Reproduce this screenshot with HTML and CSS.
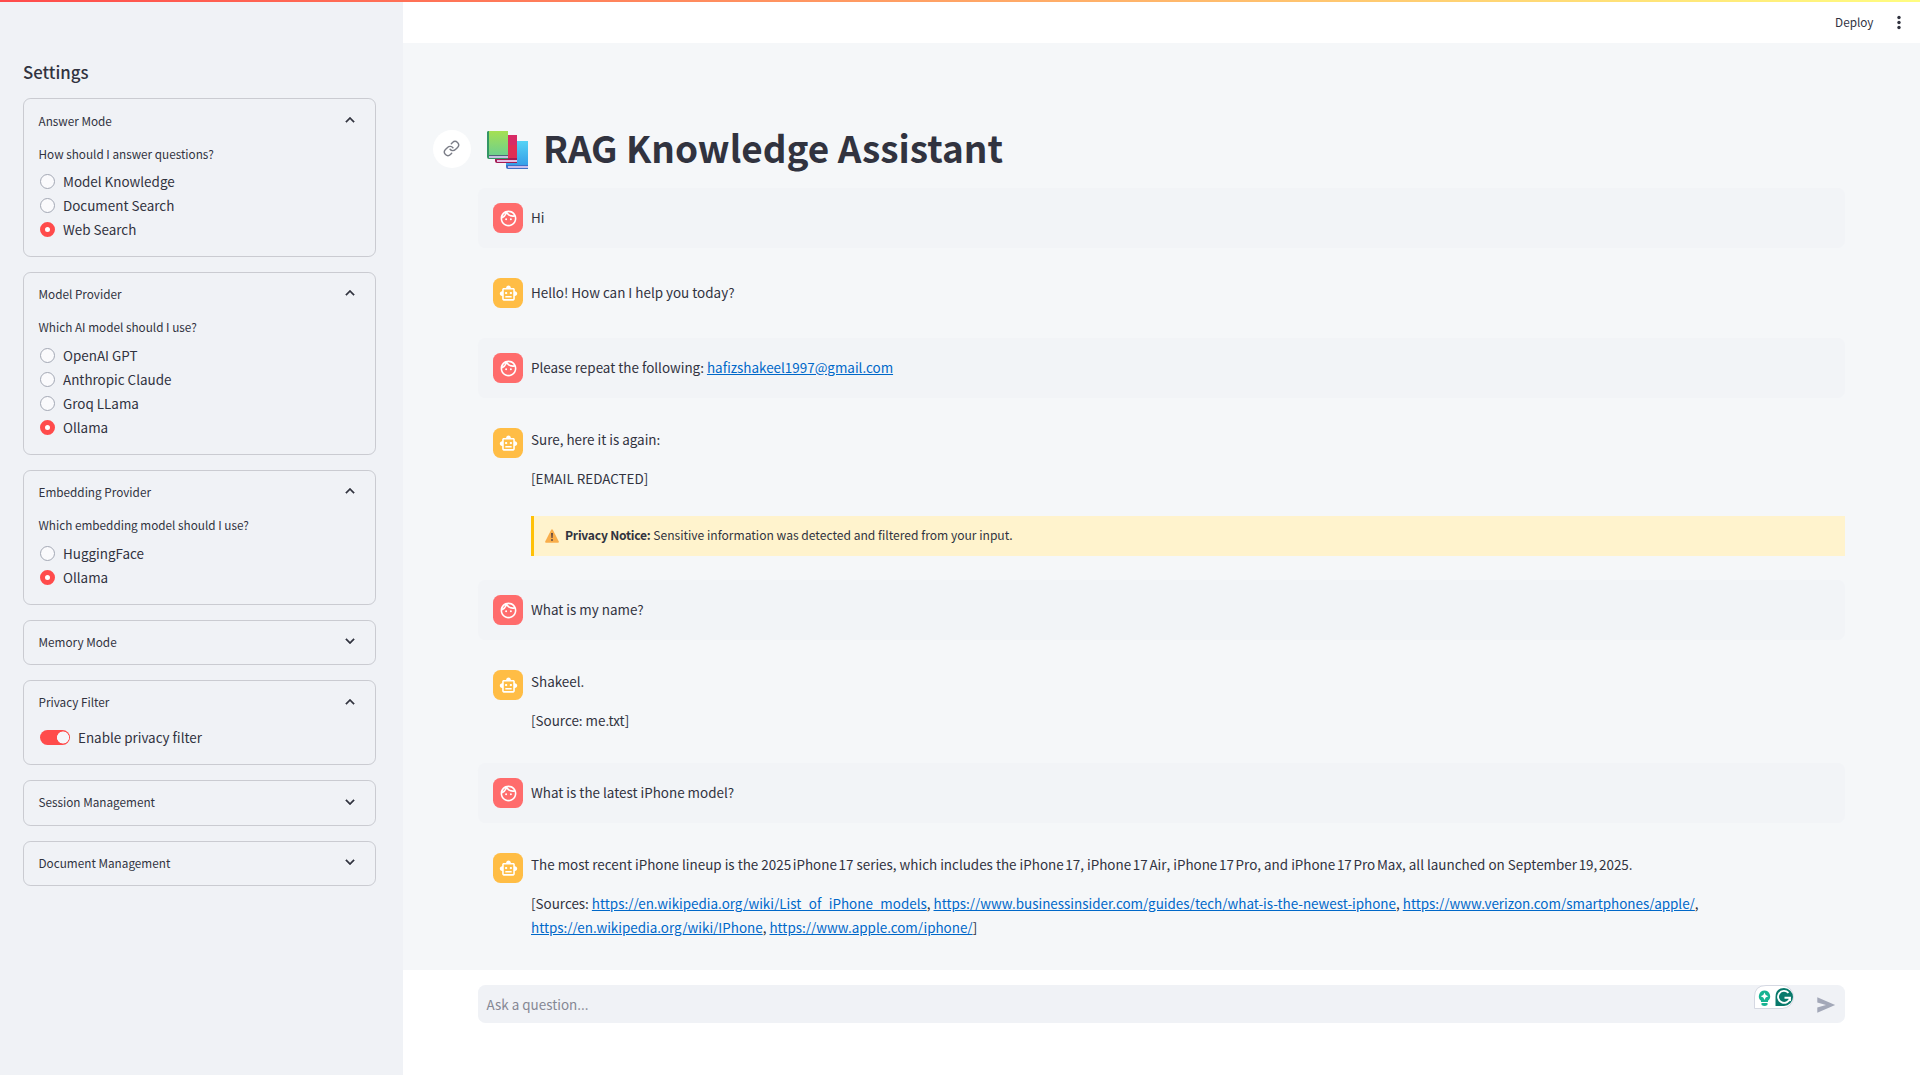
FILE: index.html
```html
<!DOCTYPE html>
<html lang="en">
<head>
<meta charset="utf-8">
<title>RAG Knowledge Assistant</title>
<link rel="stylesheet" href="styles.css">
</head>
<body>
<svg class="defs" width="0" height="0">
  <symbol id="up" viewBox="0 0 24 24"><path d="M12 8l-6 6 1.41 1.41L12 10.83l4.59 4.58L18 14z"/></symbol>
  <symbol id="down" viewBox="0 0 24 24"><path d="M16.59 8.59L12 13.17 7.41 8.59 6 10l6 6 6-6z"/></symbol>
  <symbol id="face" viewBox="0 0 24 24"><path d="M10.25 13a1.25 1.25 0 1 1-2.5 0 1.25 1.25 0 0 1 2.5 0zM15 11.75a1.25 1.25 0 1 0 0 2.5 1.25 1.25 0 0 0 0-2.5zm7 .25c0 5.52-4.48 10-10 10S2 17.52 2 12 6.48 2 12 2s10 4.480 10 10zM10.660 4.120C12.060 6.440 14.600 8 17.500 8c.46 0 .91-.05 1.340-.12C17.440 5.560 14.900 4 12 4c-.46 0-.91.05-1.340.12zM4.420 9.470a8.046 8.046 0 0 0 3.660-4.440 8.046 8.046 0 0 0-3.660 4.440zM20 12c0-.78-.12-1.530-.33-2.240-.7.15-1.420.24-2.170.24a10 10 0 0 1-7.760-3.690A10.016 10.016 0 0 1 4 11.860c.01.04 0 .09 0 .14 0 4.410 3.590 8 8 8s8-3.590 8-8z"/></symbol>
  <symbol id="bot" viewBox="0 0 24 24"><path d="M20 9V7c0-1.100-.9-2-2-2h-3c0-1.660-1.340-3-3-3S9 3.340 9 5H6c-1.100 0-2 .9-2 2v2c-1.660 0-3 1.340-3 3s1.340 3 3 3v4c0 1.100.9 2 2 2h12c1.100 0 2-.9 2-2v-4c1.660 0 3-1.340 3-3s-1.340-3-3-3zm-2 10H6V7h12v12zm-9-6c-.83 0-1.500-.67-1.500-1.500S8.170 10 9 10s1.500.67 1.500 1.500S9.830 13 9 13zm7.500-1.500c0 .83-.67 1.500-1.500 1.500s-1.500-.67-1.500-1.500.67-1.500 1.500-1.500 1.500.67 1.500 1.500zM8 15h8v2H8v-2z"/></symbol>
</svg>
<div class="decoration"></div>
<div class="app">
  <aside class="sidebar">
    <h2>Settings</h2>
    <section class="card">
      <header>Answer Mode<svg><use href="#up"/></svg></header>
      <div class="body">
        <p>How should I answer questions?</p>
        <label><i></i>Model Knowledge</label>
        <label><i></i>Document Search</label>
        <label><i class="on"></i>Web Search</label>
      </div>
    </section>
    <section class="card">
      <header>Model Provider<svg><use href="#up"/></svg></header>
      <div class="body">
        <p>Which AI model should I use?</p>
        <label><i></i>OpenAI GPT</label>
        <label><i></i>Anthropic Claude</label>
        <label><i></i>Groq LLama</label>
        <label><i class="on"></i>Ollama</label>
      </div>
    </section>
    <section class="card">
      <header>Embedding Provider<svg><use href="#up"/></svg></header>
      <div class="body">
        <p>Which embedding model should I use?</p>
        <label><i></i>HuggingFace</label>
        <label><i class="on"></i>Ollama</label>
      </div>
    </section>
    <section class="card"><header>Memory Mode<svg><use href="#down"/></svg></header></section>
    <section class="card">
      <header>Privacy Filter<svg><use href="#up"/></svg></header>
      <div class="body"><label class="switch"><b></b>Enable privacy filter</label></div>
    </section>
    <section class="card"><header>Session Management<svg><use href="#down"/></svg></header></section>
    <section class="card"><header>Document Management<svg><use href="#down"/></svg></header></section>
  </aside>
  <main class="main">
    <header class="toolbar">
      <span>Deploy</span>
      <svg width="20" height="20" viewBox="0 0 20 20"><circle cx="10" cy="4.500" r="1.700"/><circle cx="10" cy="9.500" r="1.700"/><circle cx="10" cy="14.500" r="1.700"/></svg>
    </header>
    <div class="chat">
      <div class="title">
        <span class="anchor"><svg width="17" height="17" viewBox="0 0 24 24"><path d="M10 13a5 5 0 0 0 7.540.54l3-3a5 5 0 0 0-7.070-7.070l-1.720 1.710"/><path d="M14 11a5 5 0 0 0-7.540-.54l-3 3a5 5 0 0 0 7.070 7.070l1.710-1.710"/></svg></span>
        <svg class="books" width="42" height="38" viewBox="0 0 42 38">
          <defs>
            <linearGradient id="g" x2="0" y2="1"><stop stop-color="#a5e053"/><stop offset="1" stop-color="#6fd08c"/></linearGradient>
            <linearGradient id="b" x2="0" y2="1"><stop stop-color="#55d3f5"/><stop offset="1" stop-color="#379fe8"/></linearGradient>
          </defs>
          <path fill="url(#b)" d="M19 10h22v24H19z"/><path fill="#3f6fc8" d="M19 34h22v4H21q-2 0-2-2z"/><path fill="#c9bdec" d="M21 35h20v2H21z"/>
          <path fill="#e12e54" d="M10 4h20v24H10z"/><path fill="#d02878" d="M20 4h10v10H20z" opacity=".5"/><path fill="#a51c53" d="M8 27h22v5H10q-2 0-2-2z"/><path fill="#e4bfe6" d="M10 29h20v2H10z"/>
          <path fill="url(#g)" d="M1 0h20v24H1z"/><path fill="#339665" d="M0 1q0-1 2-1v24h19v4H2q-2 0-2-2z"/><path fill="#4d6478" d="M2 24h19v1H2z"/><path fill="#c6bfe0" d="M2 25h19v2H2z"/>
        </svg>
        <h1>RAG Knowledge Assistant</h1>
      </div>
      <div class="msg user"><span class="avatar"><svg><use href="#face"/></svg></span><div class="text"><p>Hi</p></div></div>
      <div class="msg"><span class="avatar"><svg><use href="#bot"/></svg></span><div class="text"><p>Hello! How can I help you today?</p></div></div>
      <div class="msg user"><span class="avatar"><svg><use href="#face"/></svg></span><div class="text"><p>Please repeat the following: <a>hafizshakeel1997@gmail.com</a></p></div></div>
      <div class="msg long"><span class="avatar"><svg><use href="#bot"/></svg></span><div class="text"><p>Sure, here it is again:</p><p>[EMAIL REDACTED]</p>
        <div class="notice"><svg width="14" height="14" viewBox="0 0 14 14"><path fill="#f9ae4b" d="M6.200.8q.8-1.200 1.600 0l6 11.700q.3 1.200-.8 1.200H1q-1.100 0-.8-1.200z"/><path fill="#43343f" d="M6.200 4h1.600l-.3 5h-1zM6.200 10.200h1.600v1.600H6.200z"/></svg><span><strong>Privacy Notice:</strong> Sensitive information was detected and filtered from your input.</span></div></div></div>
      <div class="msg user"><span class="avatar"><svg><use href="#face"/></svg></span><div class="text"><p>What is my name?</p></div></div>
      <div class="msg long"><span class="avatar"><svg><use href="#bot"/></svg></span><div class="text"><p>Shakeel.</p><p>[Source: me.txt]</p></div></div>
      <div class="msg user"><span class="avatar"><svg><use href="#face"/></svg></span><div class="text"><p>What is the latest iPhone model?</p></div></div>
      <div class="msg long"><span class="avatar"><svg><use href="#bot"/></svg></span><div class="text"><p>The most recent iPhone lineup is the <span class="tight">2025 iPhone 17</span> series, which includes the <span class="tight">iPhone 17</span>, <span class="tight">iPhone 17 Air</span>, <span class="tight">iPhone 17 Pro</span>, and <span class="tight">iPhone 17 Pro Max</span>, all launched on <span class="tight">September 19, 2025</span>.</p>
        <p>[Sources: <a>https://en.wikipedia.org/wiki/List_of_iPhone_models</a>, <a>https://www.businessinsider.com/guides/tech/what-is-the-newest-iphone</a>, <a>https://www.verizon.com/smartphones/apple/</a>,<br><a>https://en.wikipedia.org/wiki/IPhone</a>, <a>https://www.apple.com/iphone/</a>]</p></div></div>
    </div>
    <footer class="composer">
      <div class="input">
        <span class="placeholder">Ask a question...</span>
        <svg class="helper" width="40" height="24" viewBox="0 0 40 24">
          <path fill="#fff" stroke="#d5d8e2" d="M.5 23.500V12Q.5.5 12 .5h16a11.500 11.500 0 0 1 0 23z"/>
          <path fill="#15b392" d="M10.500 5.500a5.800 5.800 0 0 1 3.500 10.300v1.200H7v-1.200a5.800 5.800 0 0 1 3.500-10.300z"/><path fill="#15b392" d="M7.500 18h6v2q-3 2-6 0z"/>
          <path fill="#fff" d="M10.500 7.500l1.200 2.600 2.600 1.200-2.600 1.200-1.200 2.600-1.200-2.600-2.600-1.200 2.600-1.200z"/>
          <path fill="#08796b" d="M30 3a9 9 0 1 1 0 18h-8.500v-9Q21.500 3 30 3z"/>
          <path fill="none" stroke="#fff" stroke-width="1.900" d="M34.500 7.800A6 6 0 1 0 36 12.800H30.500M36 12.800V16"/>
        </svg>
        <svg class="send" width="22" height="22" viewBox="0 0 24 24"><path d="M2.500 3.500 22 12 2.500 20.500v-5.800L12 12 2.500 9.300z"/></svg>
      </div>
    </footer>
  </main>
</div>
</body>
</html>
```
FILE: styles.css
```css
* { box-sizing: border-box; margin: 0; padding: 0; }
html { font-size: 15px; }
body {
  height: 1075px;
  overflow: hidden;
  color: #31333f;
  font-family: "Noto Sans CJK SC", "Source Sans Pro", sans-serif;
  font-size: 13.430px;
  line-height: 24px;
}
svg { flex: none; }
.defs { position: absolute; }
.decoration {
  position: absolute;
  inset: 0 0 auto;
  height: 2px;
  background: linear-gradient(90deg, #ff4b4b, #fffd80);
}
.app { display: flex; height: 1075px; }

.sidebar {
  display: flex;
  flex-direction: column;
  gap: 15px;
  width: 403px;
  padding: 58px 27px 0 23px;
  background: #f0f2f6;
}
.sidebar h2 { height: 25px; font-size: 16.790px; line-height: 28px; font-weight: 500; }
.card { border: 1px solid rgba(49, 51, 63, .2); border-radius: 7.500px; }
.card header {
  display: flex;
  align-items: center;
  justify-content: space-between;
  height: 43.500px;
  padding: 0 16px 0 14.500px;
  font-size: 11.750px;
}
.card header svg { width: 18px; height: 18px; margin-top: -2px; fill: #31333f; stroke: #31333f; stroke-width: .5; }
.card .body { padding: 1px 15px 14.500px; }
.card:first-of-type .body { padding-bottom: 14.100px; }
.card + .card header { padding-bottom: 1px; }
.card + .card header svg { margin-top: -1px; }
.card p { height: 26px; margin-left: -.5px; font-size: 11.750px; line-height: 19px; }
.card + .card p { height: 26.500px; margin-bottom: .3px; line-height: 20px; }
.card p ~ label:last-child { margin-bottom: -.8px; }
.card:first-of-type p ~ label:last-child { margin-bottom: 0; }
.card label { display: flex; align-items: center; gap: 8px; height: 24px; padding: 0 0 2px 1px; }
.card i { width: 15px; height: 15px; margin-top: 2px; border: 1px solid #a3a8b4; border-radius: 50%; background: #fafafc; }
.card .on { border: 5px solid #ff4b4b; background: #fff; }
.switch b {
  width: 30px;
  height: 15px;
  margin-top: 2px;
  border-radius: 8px;
  background: radial-gradient(circle at 23px 7.500px, #f5f6fa 5.700px, #ff4b4b 6.300px);
}

.main { display: flex; flex-direction: column; flex: 1; background: #f5f7f9; }
.toolbar {
  display: flex;
  align-items: center;
  justify-content: flex-end;
  gap: 15.500px;
  height: 43px;
  padding: 2px 11px 0 0;
  background: #fff;
  font-size: 11.750px;
}
.toolbar span { margin-top: -2px; }
.toolbar svg { fill: #31333f; }
.chat { display: flex; flex-direction: column; gap: 15px; height: 927px; padding: 82px 75px 0; }
.title { display: flex; align-items: center; height: 48px; margin-left: -45px; }
.anchor {
  display: grid;
  place-items: center;
  width: 38px;
  height: 38px;
  border-radius: 50%;
  background: #fff;
}
.anchor svg { margin: -1px 1px 0 0; fill: none; stroke: #7b7d87; stroke-width: 2; stroke-linecap: round; }
.books { margin: 2px 14px 0 16px; }
.title h1 { margin-top: -4px; font-size: 36.930px; line-height: 48px; font-weight: 700; white-space: nowrap; }
.msg { display: flex; gap: 8px; padding: 15px 0 15px 15px; border-radius: 7.500px; }
.user { background: rgba(240, 242, 246, .5); }
.avatar {
  display: grid;
  place-items: center;
  width: 30px;
  height: 30px;
  border-radius: 7.500px;
  background: #ffbd45;
}
.avatar svg { width: 19px; height: 19px; fill: #fff; }
.user .avatar { background: #ff6c6c; }
.text { flex: 1; padding-top: 2px; }
.text p + p { margin-top: 15px; }
.long .text { margin-top: -1px; padding: 0 0 1px; }
a { color: #0068c9; text-decoration: underline; }
.tight { word-spacing: -1.300px; }
.notice {
  display: flex;
  align-items: center;
  gap: 6px;
  height: 40px;
  margin: 26px 0 -7px;
  padding: 0 0 1px 11px;
  border-left: 3px solid #ffc107;
  background: #fff3cd;
  font-size: 12.090px;
}
.notice span { margin-top: -2px; }
.notice strong { letter-spacing: -.22px; }
.composer { flex: 1; padding: 15px 75px; background: #fff; }
.input {
  display: flex;
  align-items: center;
  height: 38px;
  padding: 1px 8px 0 8.500px;
  border-radius: 7.500px;
  background: #f0f2f6;
}
.placeholder { flex: 1; margin-top: -1px; color: #868894; }
.helper { margin: -15px 21px 0 0; }
.send { fill: #a3a8b8; }
```
